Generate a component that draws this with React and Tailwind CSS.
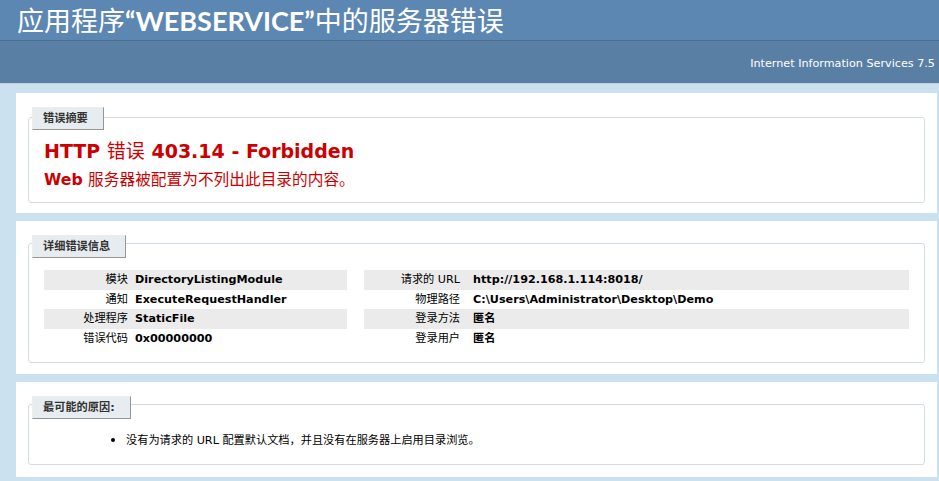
import React from 'react';

const leftRows = [
  ['模块', 'DirectoryListingModule', true],
  ['通知', 'ExecuteRequestHandler', false],
  ['处理程序', 'StaticFile', true],
  ['错误代码', '0x00000000', false],
];

const rightRows = [
  ['请求的 URL', 'http://192.168.1.114:8018/', true],
  ['物理路径', 'C:\\Users\\Administrator\\Desktop\\Demo', false],
  ['登录方法', '匿名', true],
  ['登录用户', '匿名', false],
];

const Legend = ({ children, className = '' }) => (
  <div
    className={`self-start ml-[-12px] mb-[8px] bg-[#E7ECF0] border border-t-[#EDEDED] border-l-[#EDEDED] border-r-[#969696] border-b-[#969696] pl-[10px] pr-[15px] py-[4px] font-bold text-[#333333] leading-[13px] ${className}`}
  >
    {children}
  </div>
);

const InfoTable = ({ rows, labelWidth, labelPad }) => (
  <div className="flex flex-col my-[4px]">
    {rows.map(([label, value, alt]) => (
      <div key={label} className={`flex h-[19.5px] leading-[13.5px] ${alt ? 'bg-[#EBEBEB]' : ''}`}>
        <div className={`${labelWidth} ${labelPad} shrink-0 py-[3px] text-right font-normal`}>{label}</div>
        <div className="py-[3px] font-bold whitespace-nowrap">{value}</div>
      </div>
    ))}
  </div>
);

export default function App() {
  return (
    <div className="min-h-screen bg-[#CBE1EF] text-[11.2px] text-black font-['DejaVu_Sans','Noto_Sans_CJK_SC',sans-serif]">
      <div className="h-[40px] bg-[#5C87B2] px-[17px] flex items-center overflow-hidden">
        <h1 className="text-white whitespace-nowrap leading-[28px] flex items-baseline text-[27px]">
          <span className="font-normal font-['Noto_Sans_CJK_SC',sans-serif]">应用程序</span>
          <span className="font-bold font-['Lato',sans-serif]">“WEBSERVICE”</span>
          <span className="font-normal font-['Noto_Sans_CJK_SC',sans-serif]">中的服务器错误</span>
        </h1>
      </div>
      <div className="h-[44px] bg-[#5A7FA5] border-t border-t-[#4A6C8E] border-b border-b-[#C1CFDD] pt-[16px] pr-[4px] text-right text-white leading-[14px]">
        Internet Information Services 7.5
      </div>

      <div className="ml-[16px] mr-[2px] mt-[9px] flex flex-col gap-[8px]">
        <section className="bg-white px-[10px] pt-[10px] pb-[10px]">
          <div className="mx-[2px] mt-[14px] border border-[#D3DBE3] rounded-[3px] px-[15px] pb-[13px] flex flex-col">
            <Legend className="mt-[-11px]">错误摘要</Legend>
            <h2 className="text-[19px] leading-[23px] font-bold text-[#CC0000]">
              HTTP <span className="font-normal font-['Noto_Sans_CJK_SC',sans-serif]">错误</span> 403.14 - Forbidden
            </h2>
            <h3 className="mt-[6px] text-[15.7px] leading-[19px] font-bold text-[#CC0000]">
              Web <span className="font-normal font-['Noto_Sans_CJK_SC',sans-serif]">服务器被配置为不列出此目录的内容。</span>
            </h3>
          </div>
        </section>

        <section className="bg-white px-[10px] pt-[10px] pb-[11px]">
          <div className="mx-[2px] mt-[12px] border border-[#D3DBE3] rounded-[3px] px-[15px] pb-[10px] flex flex-col">
            <Legend className="mt-[-9px]">详细错误信息</Legend>
            <div className="flex">
              <div className="w-[35%] mr-[2%]">
                <InfoTable rows={leftRows} labelWidth="w-[91px]" labelPad="pr-[7px]" />
              </div>
              <div className="w-[63%] overflow-hidden">
                <InfoTable rows={rightRows} labelWidth="w-[109px]" labelPad="pr-[13px]" />
              </div>
            </div>
          </div>
        </section>

        <section className="bg-white px-[10px] pt-[10px] pb-[12px]">
          <div className="mx-[2px] mt-[12px] border border-[#D3DBE3] rounded-[3px] px-[15px] pb-[16px] flex flex-col">
            <Legend className="mt-[-9px]">最可能的原因:</Legend>
            <ul className="mt-[5px] ml-[42px] pl-[40px] list-disc leading-[14px] marker:text-[14px]">
              <li>没有为请求的 URL 配置默认文档，并且没有在服务器上启用目录浏览。</li>
            </ul>
          </div>
        </section>
      </div>
    </div>
  );
}
